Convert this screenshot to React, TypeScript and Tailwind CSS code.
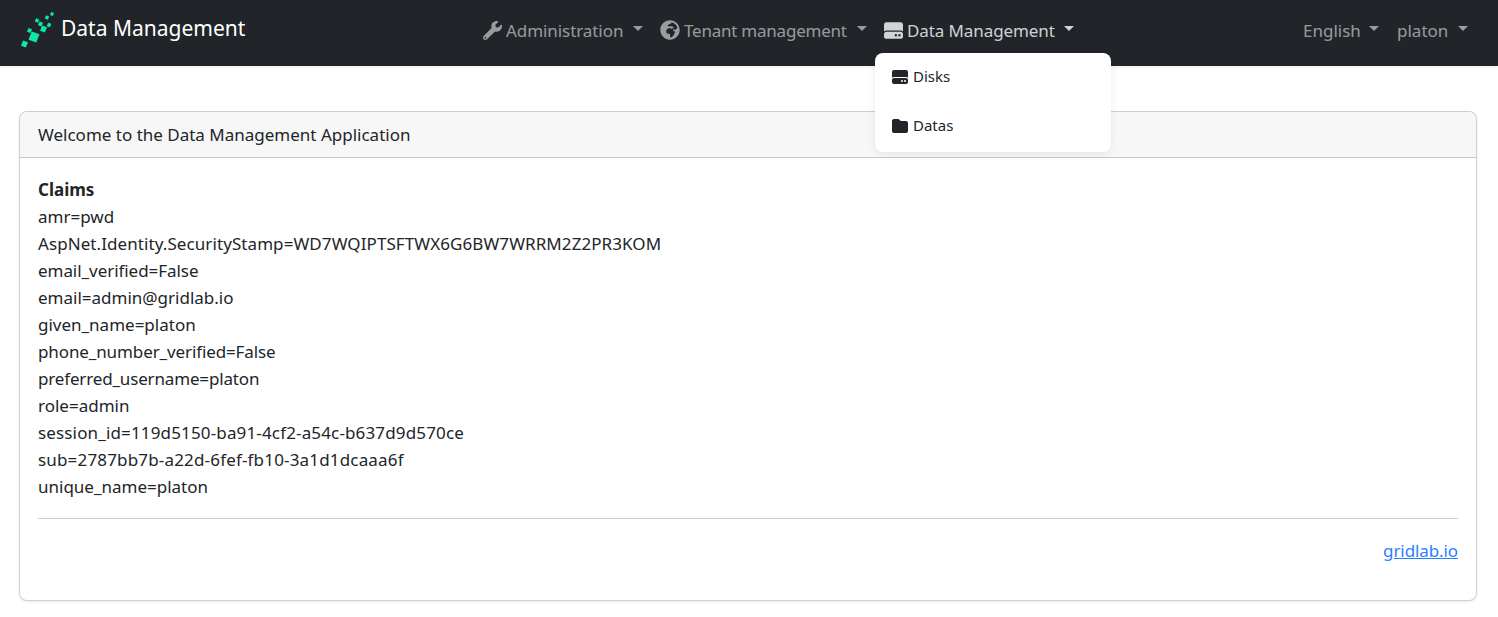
import type { ReactNode } from 'react';
import { FaWrench, FaGlobeAfrica } from 'react-icons/fa';
import { FaHardDrive, FaFolder } from 'react-icons/fa6';

const claims = [
  { text: 'amr=pwd', cls: '' },
  { text: 'AspNet.Identity.SecurityStamp=WD7WQIPTSFTWX6G6BW7WRRM2Z2PR3KOM', cls: 'tracking-[0.08px]' },
  { text: 'email_verified=False', cls: 'tracking-[-0.05px]' },
  { text: 'email=admin@gridlab.io', cls: '' },
  { text: 'given_name=platon', cls: '' },
  { text: 'phone_number_verified=False', cls: 'tracking-[-0.11px]' },
  { text: 'preferred_username=platon', cls: 'tracking-[-0.16px]' },
  { text: 'role=admin', cls: '' },
  { text: 'session_id=119d5150-ba91-4cf2-a54c-b637d9d570ce', cls: 'tracking-[0.15px]' },
  { text: 'sub=2787bb7b-a22d-6fef-fb10-3a1d1dcaaa6f', cls: 'tracking-[0.17px]' },
  { text: 'unique_name=platon', cls: '' },
];

function Logo() {
  return (
    <svg width="35" height="36" viewBox="0 0 35 36" className="shrink-0">
      <g fill="#0be8a8">
        <polygon points="3.1,28.5 8,30.25 5.9,35.5 1,33.75" />
        <polygon points="11.8,19.5 19.5,22.25 16.2,30.5 8.5,27.75" />
        <polygon points="8.5,16 12,17.25 10.5,21 7,19.75" />
        <polygon points="22.1,13.5 27,15.25 24.9,20.5 20,18.75" />
        <polygon points="28.1,10.7 31.3,11.85 29.9,15.3 26.7,14.15" />
        <polygon points="16.1,6.3 19.2,7.4 17.9,10.7 14.8,9.6" />
        <polygon points="19.5,9.5 23,10.75 21.5,14.5 18,13.25" />
        <polygon points="26.1,3.3 29.2,4.4 27.9,7.7 24.8,6.6" />
        <polygon points="31.2,0 34,1 32.8,4 30,3" />
      </g>
    </svg>
  );
}

function NavItem({ icon, label, labelCls, active }: { icon?: ReactNode; label: string; labelCls: string; active?: boolean }) {
  return (
    <a className={`flex items-center whitespace-nowrap ${active ? 'text-[#ffffffcc]' : 'text-[#ffffff8c]'}`}>
      {icon}
      <span className={labelCls}>{label}</span>
      <span className={`ml-[10px] mb-1 h-0 w-0 border-x-[5px] border-t-[5px] border-x-transparent ${active ? 'border-t-[#ffffffcc]' : 'border-t-[#ffffff8c]'}`} />
    </a>
  );
}

export default function App() {
  return (
    <div className="relative min-h-[617px] bg-white font-['Noto_Sans',sans-serif] text-[17px] leading-[27px] text-[#212529]">
      <nav className="flex h-[66px] items-center bg-[#212529] pb-[6px] pl-5 pr-[30px] shadow-[0_2px_4px_rgba(0,0,0,0.06)]">
        <a className="flex w-[463px] items-center gap-[6px] text-[21px] text-white">
          <Logo />
          <span className="mb-[3px]">Data Management</span>
        </a>
        <div className="flex items-center gap-[17px]">
          <NavItem icon={<FaWrench size={19} className="mr-1" />} label="Administration" labelCls="w-[117px] tracking-[-0.07px]" />
          <NavItem icon={<FaGlobeAfrica size={20} className="mr-1" />} label="Tenant management" labelCls="w-[163px] tracking-[-0.23px]" />
          <NavItem icon={<FaHardDrive size={19} className="mr-1" />} label="Data Management" labelCls="w-[147px] tracking-[-0.1px]" active />
        </div>
        <div className="ml-auto flex items-center gap-[18px]">
          <NavItem label="English" labelCls="w-[56px]" />
          <NavItem label="platon" labelCls="w-[51px]" />
        </div>
      </nav>

      <div className="absolute left-[875px] top-[53px] z-10 h-[99px] w-[236px] rounded-lg bg-white py-[7px] text-[15px] shadow-[0_2px_8px_rgba(0,0,0,0.08)]">
        <div className="flex h-[33px] items-center gap-[5px] px-[17px]">
          <FaHardDrive size={16} />
          Disks
        </div>
        <div className="mt-4 flex h-[33px] items-center gap-[5px] px-[17px]">
          <FaFolder size={16} />
          Datas
        </div>
      </div>

      <main className="pl-[19px] pr-[21px] pt-[45px]">
        <div className="h-[490px] rounded-lg border border-[#00000030] bg-white shadow-[0_1px_3px_rgba(0,0,0,0.08)]">
          <div className="flex h-[46px] items-center rounded-t-lg border-b border-[#00000030] bg-[#f7f7f7] px-[18px] pb-px">
            Welcome to the Data Management Application
          </div>
          <div className="px-[18px] pt-[18px]">
            <div className="font-bold">Claims</div>
            {claims.map((c) => (
              <div key={c.text} className={c.cls}>{c.text}</div>
            ))}
            <hr className="mt-[18px] border-[#00000030]" />
            <div className="mt-[18px] text-right">
              <a className="text-[#2b7fff] underline tracking-[-0.1px]">gridlab.io</a>
            </div>
          </div>
        </div>
      </main>
    </div>
  );
}
